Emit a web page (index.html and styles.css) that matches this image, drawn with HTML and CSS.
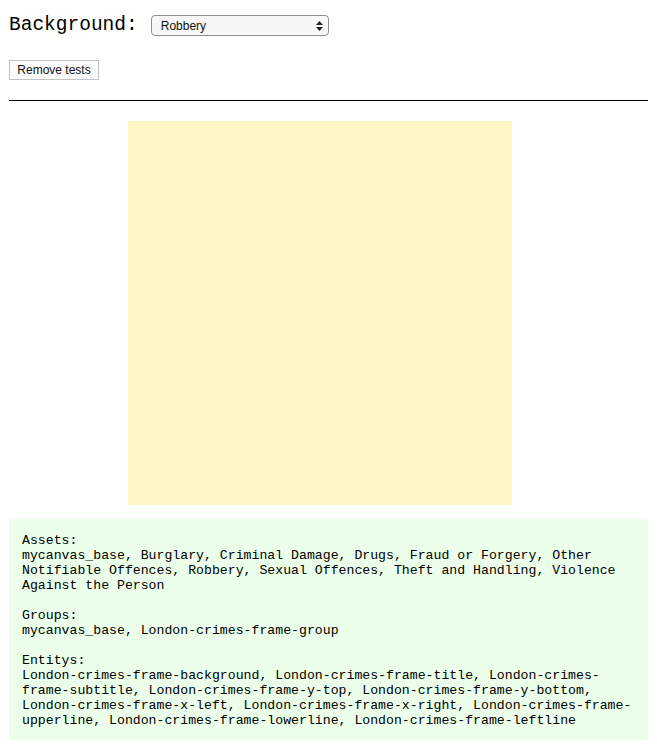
FILE: index.html
```html
<!DOCTYPE html>
<html>
<head>
<meta charset="utf-8">
<link rel="stylesheet" href="styles.css">
</head>
<body>
<div class="toolbar">
  <h1 class="label">Background:</h1>
  <div class="select">
    <span class="select-text">Robbery</span>
    <svg class="arrows" width="7" height="10" viewBox="0 0 7 10"><path d="M3.5 0 L7 4 L0 4 Z M3.5 10 L7 6 L0 6 Z" fill="#222"/></svg>
  </div>
</div>
<div class="btn-row"><button class="btn">Remove tests</button></div>
<hr class="rule">
<div class="canvas"></div>
<div class="info">
  <p>Assets:<br>mycanvas_base, Burglary, Criminal Damage, Drugs, Fraud or Forgery, Other Notifiable Offences, Robbery, Sexual Offences, Theft and Handling, Violence Against the Person</p>
  <p>Groups:<br>mycanvas_base, London-crimes-frame-group</p>
  <p>Entitys:<br>London-crimes-frame-background, London-crimes-frame-title, London-crimes-frame-subtitle, London-crimes-frame-y-top, London-crimes-frame-y-bottom, London-crimes-frame-x-left, London-crimes-frame-x-right, London-crimes-frame-upperline, London-crimes-frame-lowerline, London-crimes-frame-leftline</p>
</div>
</body>
</html>
```
FILE: styles.css
```css
body {
  margin: 8px;
  background: #fff;
  font-family: "Liberation Sans", Arial, sans-serif;
}
.toolbar {
  display: flex;
  align-items: center;
  padding-top: 7px;
  height: 21px;
  padding-left: 1px;
}
.label {
  margin: 0;
  font-family: "Liberation Mono", "Courier New", monospace;
  font-weight: normal;
  font-size: 19.5px;
  line-height: 21px;
  color: #000;
}
.select {
  margin-left: 13px;
  border: 1px solid #8e8e8e;
  border-radius: 4px;
  background: #f7f7f7;
  display: flex;
  align-items: center;
  justify-content: space-between;
  padding: 0 5px 0 9px;
  box-sizing: border-box;
  width: 178px;
  height: 21px;
}
.select-text {
  font-size: 12px;
  color: #111;
}
.arrows {
  display: block;
}
.btn-row {
  padding-top: 24px;
  padding-left: 1px;
  height: 20px;
}
.btn {
  display: block;
  margin: 0;
  width: 90px;
  height: 20px;
  border: 1px solid #c2c2c2;
  background: #fbfbfb;
  font-family: "Liberation Sans", Arial, sans-serif;
  font-size: 12px;
  color: #111;
  padding: 0;
}
.rule {
  margin: 20px 1px 0 1px;
  border: none;
  border-top: 1px solid #000;
  height: 0;
}
.canvas {
  width: 384px;
  height: 384px;
  margin: 20px 0 0 120px;
  background: #fff7c5;
}
.info {
  margin: 14px 1px 0 1px;
  background: #ebffea;
  padding: 14px 13px 12px;
  font-family: "Liberation Mono", "Courier New", monospace;
  font-size: 13.2px;
  line-height: 15px;
  color: #000;
}
.info p {
  margin: 0 0 15px;
}
.info p:last-child {
  margin-bottom: 0;
}
```
